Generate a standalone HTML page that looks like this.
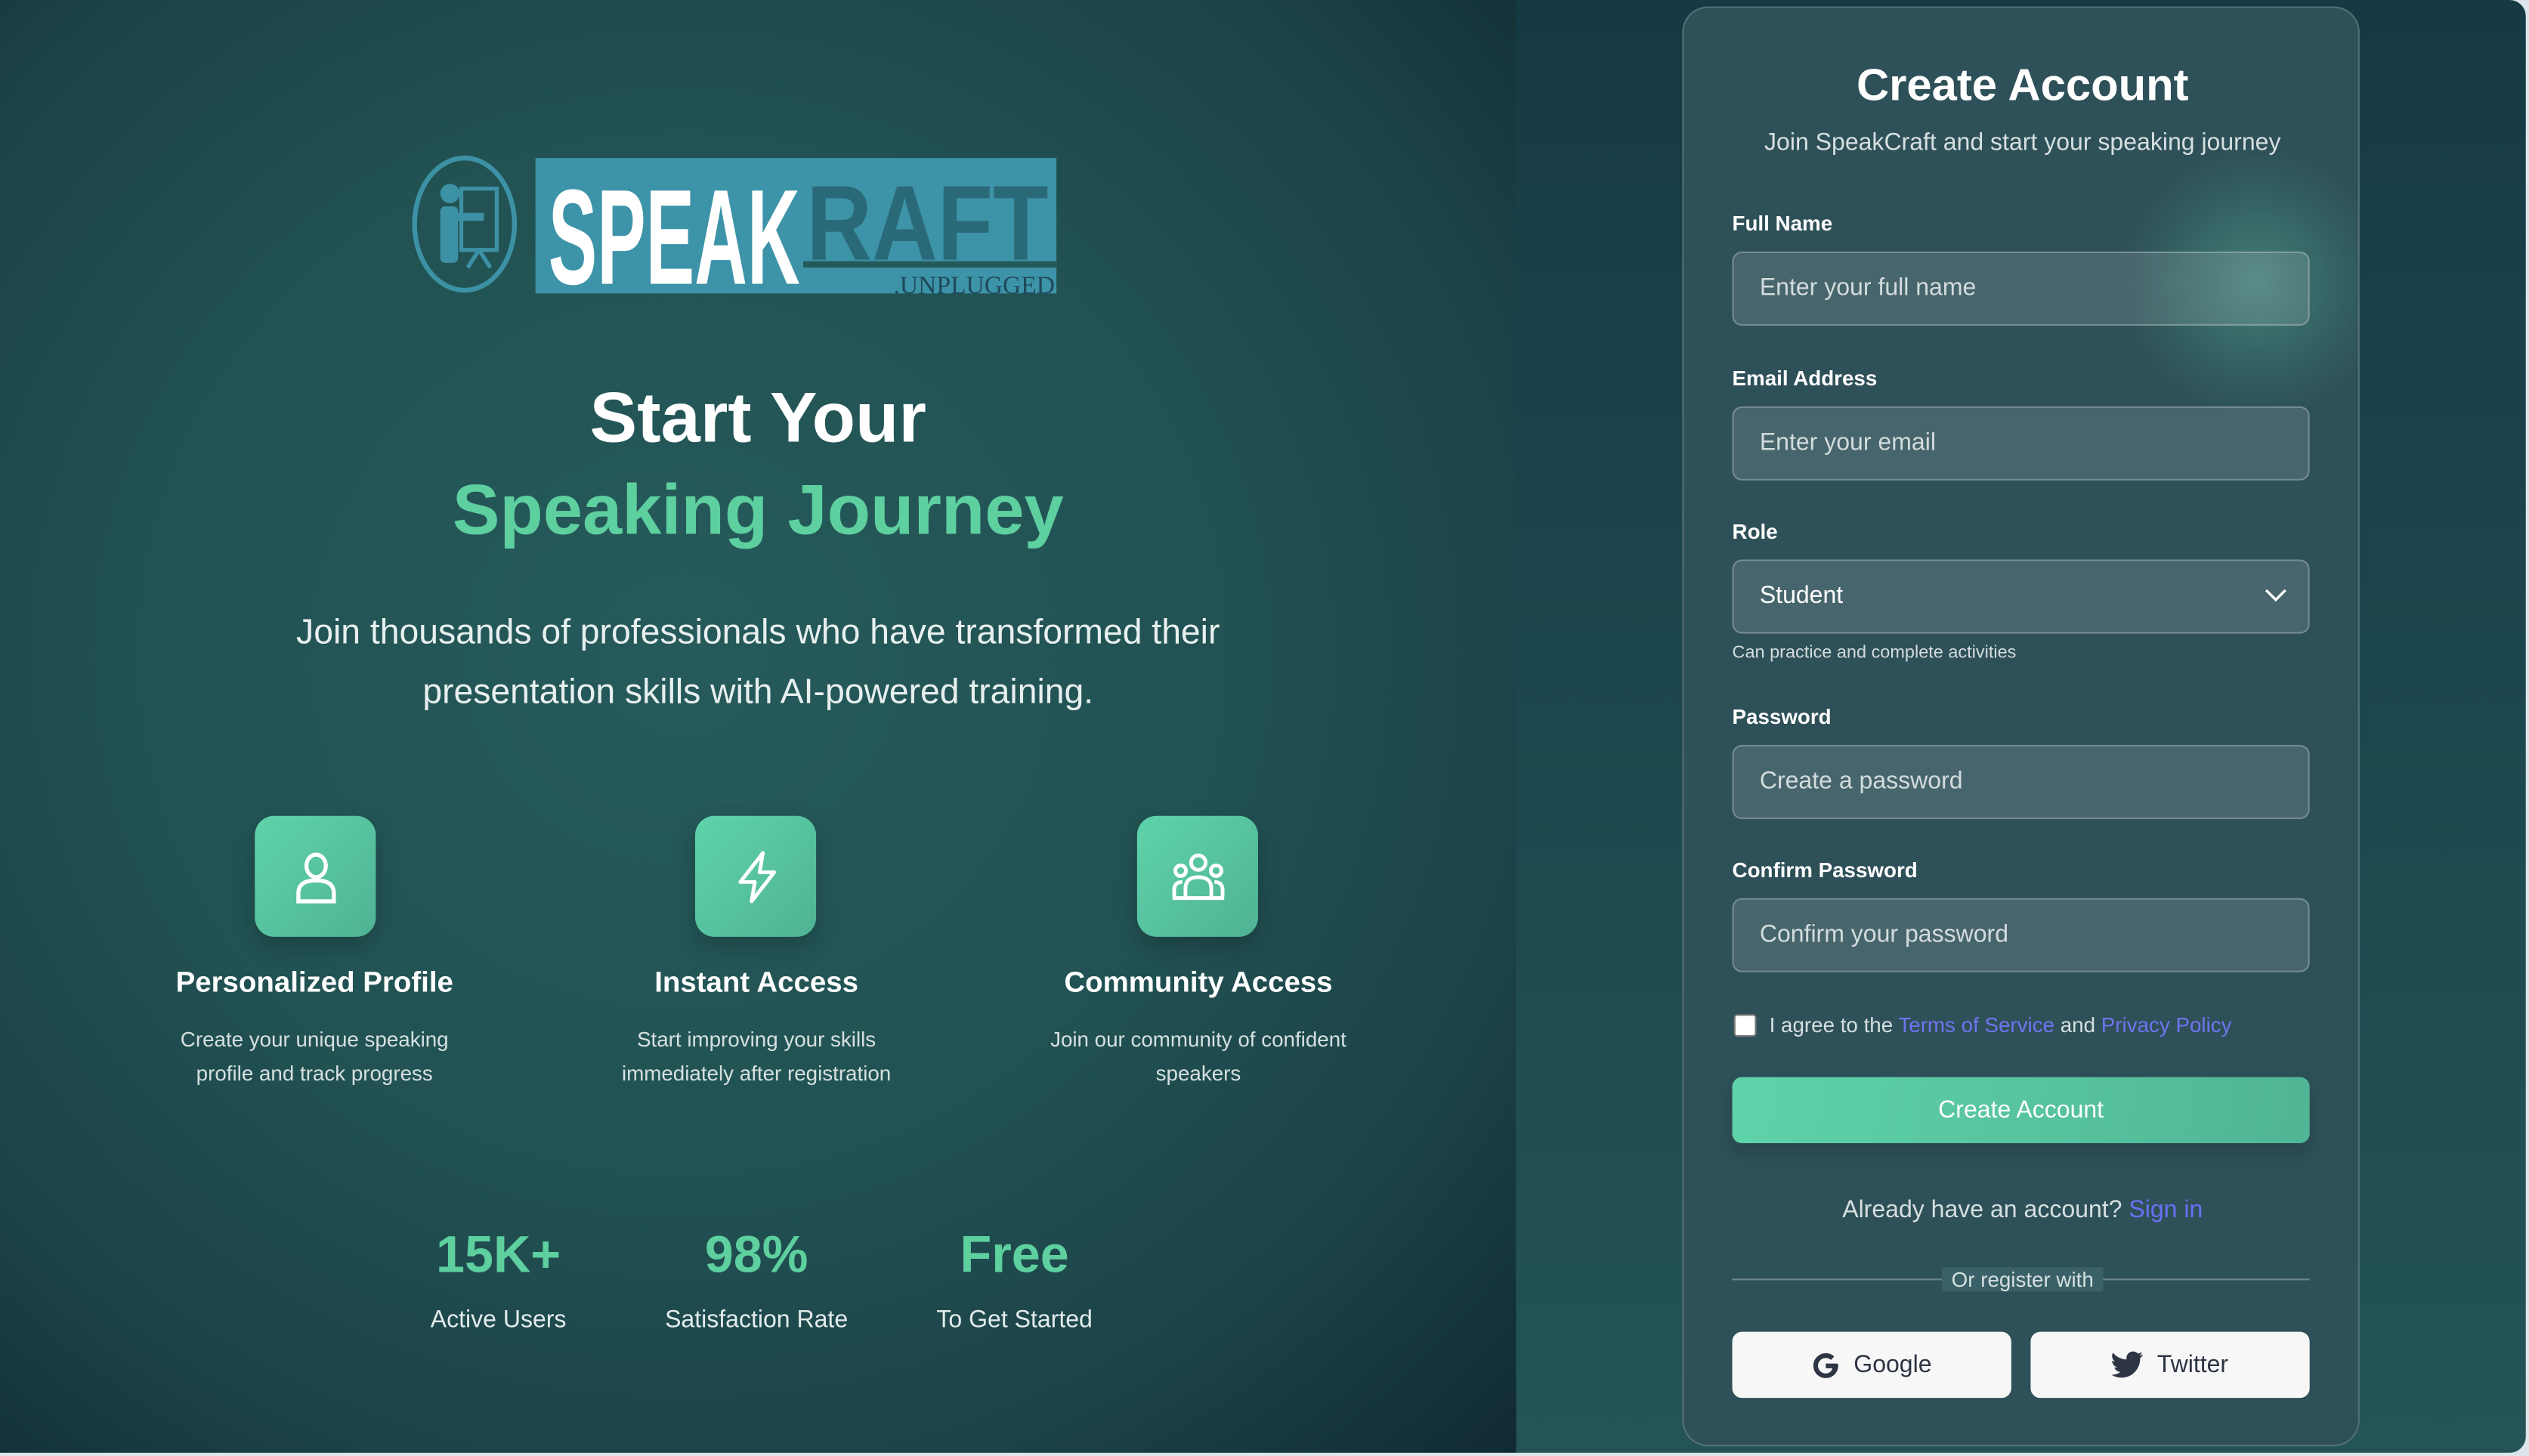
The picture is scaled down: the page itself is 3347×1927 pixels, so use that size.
<!DOCTYPE html>
<html><head><meta charset="utf-8"><style>
*{box-sizing:border-box;margin:0;padding:0}
html,body{width:3347px;height:1927px;overflow:hidden;background:#dbe5ea;font-family:"Liberation Sans",sans-serif}
#w{position:absolute;left:0;top:0;width:1568px;height:903px;transform:scale(2.13457,2.13400);transform-origin:0 0}
#app{position:absolute;left:0;top:0;width:1566px;height:901px;border-radius:0 10px 10px 0;overflow:hidden;background:linear-gradient(180deg,#163a44 0%,#1d474e 50%,#245457 100%)}
#left{position:absolute;left:0;top:0;width:940px;height:901px;background:radial-gradient(ellipse at 45% 45%,#265a5b 0%,#225253 45%,#1b4248 75%,#102a31 100%)}
.c{position:absolute;text-align:center;white-space:nowrap}
.card{position:absolute;left:1043px;top:4px;width:420px;height:893px;border-radius:16px;background:#2e5058;border:1px solid rgba(255,255,255,.18);overflow:hidden}
.glow{position:absolute;left:270px;top:85px;width:170px;height:170px;border-radius:50%;background:radial-gradient(circle,rgba(90,170,150,.5) 0%,rgba(70,150,130,.22) 45%,rgba(46,80,88,0) 70%)}
.lab{position:absolute;left:30px;font-size:13px;font-weight:bold;color:#fff}
.inp{position:absolute;left:30px;width:358px;height:46px;border-radius:6px;background:rgba(255,255,255,.12);border:1px solid rgba(255,255,255,.25);color:#d3dcdd;font-size:15px;line-height:44px;padding-left:16px}
.ic{position:absolute;width:75px;height:75px;border-radius:12px;background:linear-gradient(135deg,#5fd3ab,#4fb394);box-shadow:0 6px 14px rgba(0,0,0,.2);display:flex;align-items:center;justify-content:center}
.ft{font-size:18px;font-weight:bold;color:#fff}
.fd{font-size:13px;color:#d5e0df;line-height:21px}
.sv{font-size:32px;font-weight:bold;color:#5ecf9f}
.sl{font-size:15px;color:#e3eceb}
.sb{position:absolute;top:821px;width:173px;height:41px;border-radius:6px;background:#f7f7f7;display:flex;align-items:center;justify-content:center;font-size:15px;color:#2d3544;gap:8px}
</style></head><body><div id="w"><div id="app">
<div id="left">
  <svg style="position:absolute;left:254px;top:95px" width="404" height="90" viewBox="0 0 404 90">
    <ellipse cx="34" cy="44" rx="31" ry="41" fill="none" stroke="#3c91a5" stroke-width="3"/>
    <circle cx="25" cy="25" r="6" fill="#3c91a5"/>
    <rect x="19" y="33" width="11" height="35" rx="3" fill="#3c91a5"/>
    <rect x="28" y="37" width="18" height="5" fill="#3c91a5"/>
    <rect x="32" y="22" width="22" height="38" fill="none" stroke="#3c91a5" stroke-width="2.5"/>
    <path d="M43 60 L36 71 M43 60 L50 71" stroke="#3c91a5" stroke-width="2.5"/>
    <rect x="78" y="3" width="323" height="84" fill="#3d93a8"/>
    <text x="246" y="66" font-family="Liberation Sans" font-weight="bold" font-size="66" fill="#2a6a78" textLength="150" lengthAdjust="spacingAndGlyphs">RAFT</text>
    <rect x="244" y="67" width="157" height="4" fill="#255a5b"/>
    <text x="86" y="81" font-family="Liberation Sans" font-weight="bold" font-size="84" fill="#fff" textLength="156" lengthAdjust="spacingAndGlyphs">SPEAK</text>
    <text x="300" y="87" font-family="Liberation Serif" font-size="16" fill="#1f4a5a" textLength="100" lengthAdjust="spacingAndGlyphs">.UNPLUGGED</text>
  </svg>
  <div class="c" style="left:0;width:940px;top:235px;font-size:44px;font-weight:bold;color:#fff">Start Your</div>
  <div class="c" style="left:0;width:940px;top:292px;font-size:44px;font-weight:bold;color:#5ecf9f">Speaking Journey</div>
  <div class="c" style="left:0;width:940px;top:373px;font-size:21.7px;line-height:37px;color:#e8f0ef">Join thousands of professionals who have transformed their<br>presentation skills with AI-powered training.</div>

  <div class="ic" style="left:158px;top:506px"><svg width="30" height="34" viewBox="0 0 30 34" fill="none" stroke="#fff" stroke-width="2.5"><ellipse cx="15" cy="10" rx="6" ry="7"/><path d="M4 32 V27 Q4 19 15 19 Q26 19 26 27 V32 Z"/></svg></div>
  <div class="ic" style="left:431px;top:506px"><svg width="30" height="34" viewBox="0 0 30 34" fill="none" stroke="#fff" stroke-width="2.3" stroke-linejoin="round"><path d="M19 2 L5 20 H14 L12 32 L26 14 H17 Z"/></svg></div>
  <div class="ic" style="left:705px;top:506px"><svg width="36" height="32" viewBox="0 0 36 32" fill="none" stroke="#fff" stroke-width="2.3"><circle cx="18" cy="7" r="4.5"/><circle cx="7" cy="12" r="3.3"/><circle cx="29" cy="12" r="3.3"/><path d="M10 28 V23 Q10 16 18 16 Q26 16 26 23 V28"/><path d="M3 28 V24 Q3 19 8 19 M33 28 V24 Q33 19 28 19"/><path d="M2 29 H34"/></svg></div>

  <div class="c ft" style="left:95px;width:200px;top:599px">Personalized Profile</div>
  <div class="c ft" style="left:369px;width:200px;top:599px">Instant Access</div>
  <div class="c ft" style="left:643px;width:200px;top:599px">Community Access</div>
  <div class="c fd" style="left:95px;width:200px;top:634px">Create your unique speaking<br>profile and track progress</div>
  <div class="c fd" style="left:359px;width:220px;top:634px">Start improving your skills<br>immediately after registration</div>
  <div class="c fd" style="left:633px;width:220px;top:634px">Join our community of confident<br>speakers</div>

  <div class="c sv" style="left:249px;width:120px;top:760px">15K+</div>
  <div class="c sv" style="left:409px;width:120px;top:760px">98%</div>
  <div class="c sv" style="left:569px;width:120px;top:760px">Free</div>
  <div class="c sl" style="left:239px;width:140px;top:810px">Active Users</div>
  <div class="c sl" style="left:399px;width:140px;top:810px">Satisfaction Rate</div>
  <div class="c sl" style="left:559px;width:140px;top:810px">To Get Started</div>
</div>

<div class="card">
  <div class="glow"></div>
  <div class="c" style="left:0;width:420px;top:32px;font-size:28px;font-weight:bold;color:#fff">Create Account</div>
  <div class="c" style="left:0;width:420px;top:75px;font-size:15px;color:#d6dfe0">Join SpeakCraft and start your speaking journey</div>
  <div class="lab" style="top:126px">Full Name</div>
  <div class="inp" style="top:151px">Enter your full name</div>
  <div class="lab" style="top:222px">Email Address</div>
  <div class="inp" style="top:247px">Enter your email</div>
  <div class="lab" style="top:317px">Role</div>
  <div class="inp" style="top:342px;color:#fff">Student<svg style="position:absolute;right:13px;top:17px" width="14" height="9" viewBox="0 0 14 9"><path d="M1 1 L7 7 L13 1" fill="none" stroke="#fff" stroke-width="1.6"/></svg></div>
  <div style="position:absolute;left:30px;top:394px;font-size:11px;color:#d3dcdd">Can practice and complete activities</div>
  <div class="lab" style="top:432px">Password</div>
  <div class="inp" style="top:457px">Create a password</div>
  <div class="lab" style="top:527px">Confirm Password</div>
  <div class="inp" style="top:552px">Confirm your password</div>
  <div style="position:absolute;left:31px;top:624px;width:14px;height:14px;background:#fff;border:1px solid #777;border-radius:2px"></div>
  <div style="position:absolute;left:53px;top:623px;font-size:13px;color:#d6dfe0">I agree to the <span style="color:#6f74f0">Terms of Service</span> and <span style="color:#6f74f0">Privacy Policy</span></div>
  <div style="position:absolute;left:30px;top:663px;width:358px;height:41px;border-radius:6px;background:linear-gradient(100deg,#5fd3aa,#50b595);box-shadow:0 6px 12px rgba(0,0,0,.15);color:#fff;font-size:15px;text-align:center;line-height:41px">Create Account</div>
  <div class="c" style="left:0;width:420px;top:737px;font-size:15px;color:#d6dfe0">Already have an account? <span style="color:#6a70f5">Sign in</span></div>
  <div style="position:absolute;left:30px;top:788px;width:358px;height:1px;background:rgba(255,255,255,.3)"></div>
  <div class="c" style="left:160px;width:100px;top:781px;font-size:13px;color:#d6dfe0;background:#3a6167">Or register with</div>
  <div class="sb" style="left:30px"><svg width="18" height="18" viewBox="0 0 24 24"><path d="M21.5 10.2H12v3.9h5.5c-.6 2.6-2.8 4.3-5.5 4.3a6.4 6.4 0 1 1 4.2-11.2l2.8-2.8A10.3 10.3 0 1 0 22.3 12c0-.6-.1-1.2-.8-1.8z" fill="#2d3544"/></svg>Google</div>
  <div class="sb" style="left:215px"><svg width="20" height="17" viewBox="0 0 24 20"><path d="M23.6 2.3c-.9.4-1.8.6-2.8.8 1-.6 1.800-1.6 2.1-2.7-1 .6-2 1-3.1 1.2A4.9 4.9 0 0 0 11.4 6 13.9 13.9 0 0 1 1.3.9a4.9 4.9 0 0 0 1.5 6.6c-.8 0-1.6-.3-2.2-.6 0 2.4 1.7 4.4 3.9 4.8-.7.2-1.5.2-2.2.1.6 2 2.400 3.4 4.6 3.4A9.9 9.9 0 0 1 0 17.3 13.9 13.9 0 0 0 7.5 19.5c9.1 0 14-7.5 14-14v-.6c1-.7 1.8-1.6 2.1-2.6z" fill="#2d3544"/></svg>Twitter</div>
</div>
</div></div></body></html>
